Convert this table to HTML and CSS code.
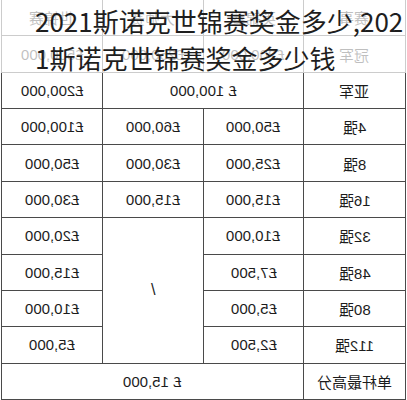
FILE: index.html
```html
<!DOCTYPE html>
<html lang="zh">
<head>
<meta charset="utf-8">
<title>2021斯诺克世锦赛奖金</title>
<link rel="stylesheet" href="styles.css">
</head>
<body>
<div class="page">
  <div class="grid">
    <div class="cell"><span class="m">世锦赛</span></div>
    <div class="cell"><span class="m">大师赛</span></div>
    <div class="cell"><span class="m">英锦赛</span></div>
    <div class="cell"><span class="m">赛事</span></div>

    <div class="cell"><span class="m">£500,000</span></div>
    <div class="cell"><span class="m">£250,000</span></div>
    <div class="cell"><span class="m">£200,000</span></div>
    <div class="cell"><span class="m">冠军</span></div>

    <div class="cell"><span class="m">£200,000</span></div>
    <div class="cell span2"><span class="m">£ 100,000</span></div>
    <div class="cell"><span class="m">亚军</span></div>

    <div class="cell"><span class="m">£100,000</span></div>
    <div class="cell"><span class="m">£60,000</span></div>
    <div class="cell"><span class="m">£50,000</span></div>
    <div class="cell"><span class="m">4强</span></div>

    <div class="cell"><span class="m">£50,000</span></div>
    <div class="cell"><span class="m">£30,000</span></div>
    <div class="cell"><span class="m">£25,000</span></div>
    <div class="cell"><span class="m">8强</span></div>

    <div class="cell"><span class="m">£30,000</span></div>
    <div class="cell"><span class="m">£15,000</span></div>
    <div class="cell"><span class="m">£15,000</span></div>
    <div class="cell"><span class="m">16强</span></div>

    <div class="cell"><span class="m">£20,000</span></div>
    <div class="cell rows4"><span class="m slash">/</span></div>
    <div class="cell"><span class="m">£10,000</span></div>
    <div class="cell"><span class="m">32强</span></div>

    <div class="cell"><span class="m">£15,000</span></div>
    <div class="cell"><span class="m">£7,500</span></div>
    <div class="cell"><span class="m">48强</span></div>

    <div class="cell"><span class="m">£10,000</span></div>
    <div class="cell"><span class="m">£5,000</span></div>
    <div class="cell"><span class="m">80强</span></div>

    <div class="cell"><span class="m">£5,000</span></div>
    <div class="cell"><span class="m">£2,500</span></div>
    <div class="cell"><span class="m">112强</span></div>

    <div class="cell span3"><span class="m">£ 15,000</span></div>
    <div class="cell"><span class="m">单杆最高分</span></div>
  </div>
  <div class="fade"></div>
  <h1 class="title">2021斯诺克世锦赛奖金多少,2021斯诺克世锦赛奖金多少钱</h1>
</div>
</body>
</html>
```

FILE: styles.css
```css
html, body {
  margin: 0;
  padding: 0;
  background: #ffffff;
  overflow: hidden;
}

.page {
  position: relative;
  width: 407px;
  height: 400px;
  overflow: hidden;
}

.grid {
  margin: -1px 0 0 1px;
  width: 405px;
  height: 401px;
  box-sizing: border-box;
  padding: 1px;
  gap: 1px;
  background: #4a4a4a;
  display: grid;
  grid-template-columns: 100px 100px 99px 101px;
  grid-template-rows: repeat(11, 1fr);
  font-family: "Liberation Sans", "Noto Sans CJK SC", sans-serif;
  font-size: 15px;
  color: #1c1c1c;
}

.cell {
  background: #ffffff;
  display: flex;
  align-items: center;
  justify-content: center;
}

.span2 {
  grid-column: span 2;
}

.span3 {
  grid-column: span 3;
}

.rows4 {
  grid-row: span 4;
}

.m {
  display: inline-block;
  transform: scaleX(-1);
  white-space: nowrap;
}

.slash {
  font-size: 16px;
}

.fade {
  position: absolute;
  left: 0;
  top: 0;
  width: 407px;
  height: 73px;
  background: rgba(255, 255, 255, 0.72);
}

.title {
  position: absolute;
  left: 35px;
  top: 2px;
  width: 374px;
  margin: 0;
  font-family: "Noto Sans CJK SC", sans-serif;
  font-size: 26px;
  font-weight: 400;
  line-height: 37px;
  color: #1e1e1e;
  word-break: break-all;
}
```
